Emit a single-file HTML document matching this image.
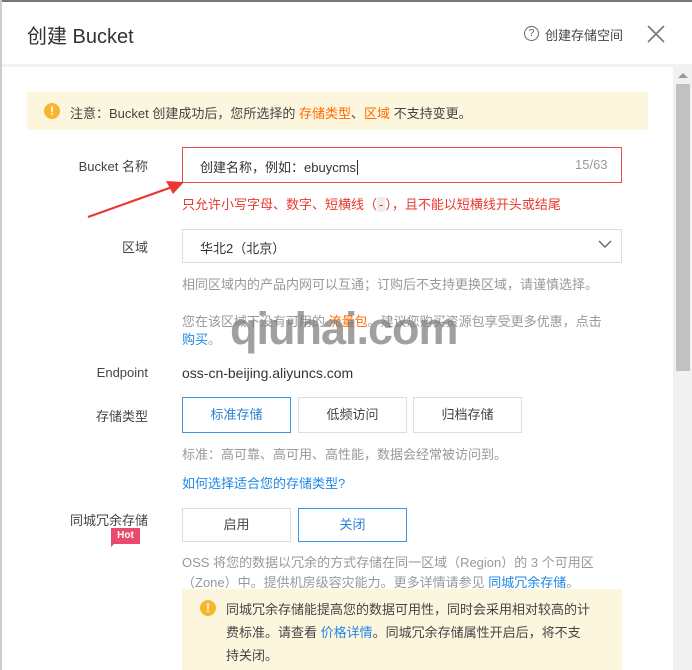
<!DOCTYPE html>
<html><head><meta charset="utf-8"><style>
*{margin:0;padding:0;box-sizing:border-box}
body{width:692px;height:670px;overflow:hidden;background:#fff;font-family:"Liberation Sans","Noto Sans CJK SC",sans-serif;font-size:13px;color:#333;position:relative}
.a{position:absolute;white-space:nowrap}
.lbl{position:absolute;right:544px;text-align:right;color:#444;white-space:nowrap}
.g{color:#999}
.blue{color:#1e88e5}
.or{color:#ff6a00}
.btn{position:absolute;border:1px solid #ddd;text-align:center;color:#444;background:#fff}
.btn.on{border-color:#3b95e2;color:#2a82d8}
.ic{position:absolute;width:16px;height:16px;border-radius:50%;background:#f8b52d;color:#fff;font-weight:bold;font-size:12px;line-height:16px;text-align:center}
</style></head><body>
<div class="a" style="left:0;top:0;width:692px;height:2px;background:#777"></div>
<div class="a" style="left:0;top:0;width:2px;height:670px;background:#ccc"></div>
<div class="a" style="left:27px;top:20px;font-size:20px;color:#333">创建 Bucket</div>
<div class="a" style="left:524px;top:26px;width:15px;height:15px;border:1px solid #666;border-radius:50%;font-size:10px;line-height:13px;text-align:center;color:#555">?</div>
<div class="a" style="left:545px;top:25px;color:#444">创建存储空间</div>
<svg class="a" style="left:647px;top:25px" width="18" height="18"><path d="M1 1L17 17M17 1L1 17" stroke="#777" stroke-width="1.6"/></svg>
<div class="a" style="left:2px;top:64px;width:690px;height:3px;background:#f2f2f2"></div>
<div class="a" style="left:673px;top:67px;width:19px;height:603px;background:#f1f1f1"></div>
<div class="a" style="left:676px;top:84px;width:14px;height:287px;background:#c1c1c1"></div>
<div class="a" style="left:678px;top:73px;width:0;height:0;border:5px solid transparent;border-bottom:5px solid #999;border-top:0"></div>
<div class="a" style="left:27px;top:92px;width:621px;height:38px;background:#fdf6df"></div>
<div class="ic" style="left:44px;top:103px">!</div>
<div class="a" style="left:70px;top:103px;color:#444">注意：Bucket 创建成功后，您所选择的 <span class="or">存储类型</span>、<span class="or">区域</span> 不支持变更。</div>
<div class="lbl" style="top:156px">Bucket 名称</div>
<div class="a" style="left:182px;top:147px;width:440px;height:36px;border:1px solid #e85050"></div>
<div class="a" style="left:200px;top:157px;color:#333">创建名称，例如：ebuycms<span style="border-left:1px solid #333;margin-left:1px"></span></div>
<div class="a g" style="left:575px;top:157px">15/63</div>
<div class="a" style="left:182px;top:194px;color:#e8382f">只允许小写字母、数字、短横线（<span style="background:#eee;padding:0 2px">-</span>），且不能以短横线开头或结尾</div>
<svg class="a" style="left:80px;top:175px" width="110" height="50"><path d="M8 42L95 11" stroke="#e8382f" stroke-width="2.2"/><path d="M104 7L86 6L93 19Z" fill="#e8382f"/></svg>
<div class="lbl" style="top:237px">区域</div>
<div class="a" style="left:182px;top:229px;width:440px;height:34px;border:1px solid #ddd"></div>
<div class="a" style="left:200px;top:238px;color:#333">华北2（北京）</div>
<svg class="a" style="left:598px;top:239px" width="14" height="10"><path d="M1 2L7 8L13 2" stroke="#666" stroke-width="1.4" fill="none"/></svg>
<div class="a g" style="left:182px;top:274px">相同区域内的产品内网可以互通；订购后不支持更换区域，请谨慎选择。</div>
<div class="a g" style="left:182px;top:311px">您在该区域下没有可用的 <span class="or">流量包</span>。建议您购买资源包享受更多优惠，点击</div>
<div class="a blue" style="left:182px;top:329px">购买<span class="g">。</span></div>
<div class="a" style="left:230px;top:303px;font-size:45px;font-weight:bold;color:rgba(120,120,120,0.7);letter-spacing:-1px">qiuhai.com</div>
<div class="lbl" style="top:365px">Endpoint</div>
<div class="a" style="left:182px;top:365px;font-size:14px">oss-cn-beijing.aliyuncs.com</div>
<div class="lbl" style="top:406px">存储类型</div>
<div class="btn on" style="left:182px;top:397px;width:109px;height:36px;line-height:34px">标准存储</div>
<div class="btn" style="left:298px;top:397px;width:109px;height:36px;line-height:34px">低频访问</div>
<div class="btn" style="left:413px;top:397px;width:109px;height:36px;line-height:34px">归档存储</div>
<div class="a g" style="left:182px;top:444px">标准：高可靠、高可用、高性能，数据会经常被访问到。</div>
<div class="a blue" style="left:182px;top:473px">如何选择适合您的存储类型?</div>
<div class="lbl" style="top:510px">同城冗余存储</div>
<div class="a" style="left:111px;top:528px;width:29px;height:16px;background:#ea4a6d;color:#fff;font-size:10px;font-weight:bold;text-align:center;line-height:16px">Hot</div>
<div class="a" style="left:111px;top:543px;width:0;height:0;border-left:4px solid #ea4a6d;border-bottom:4px solid transparent"></div>
<div class="btn" style="left:182px;top:508px;width:109px;height:34px;line-height:32px">启用</div>
<div class="btn on" style="left:298px;top:508px;width:109px;height:34px;line-height:32px">关闭</div>
<div class="a g" style="left:182px;top:552px">OSS 将您的数据以冗余的方式存储在同一区域（Region）的 3 个可用区</div>
<div class="a g" style="left:182px;top:572px">（Zone）中。提供机房级容灾能力。更多详情请参见 <span class="blue">同城冗余存储</span>。</div>
<div class="a" style="left:182px;top:589px;width:440px;height:81px;background:#fdf6df"></div>
<div class="ic" style="left:200px;top:600px">!</div>
<div class="a" style="left:226px;top:598px;color:#444;line-height:23px">同城冗余存储能提高您的数据可用性，同时会采用相对较高的计<br>费标准。请查看 <span class="blue">价格详情</span>。同城冗余存储属性开启后，将不支<br>持关闭。</div>
</body></html>
